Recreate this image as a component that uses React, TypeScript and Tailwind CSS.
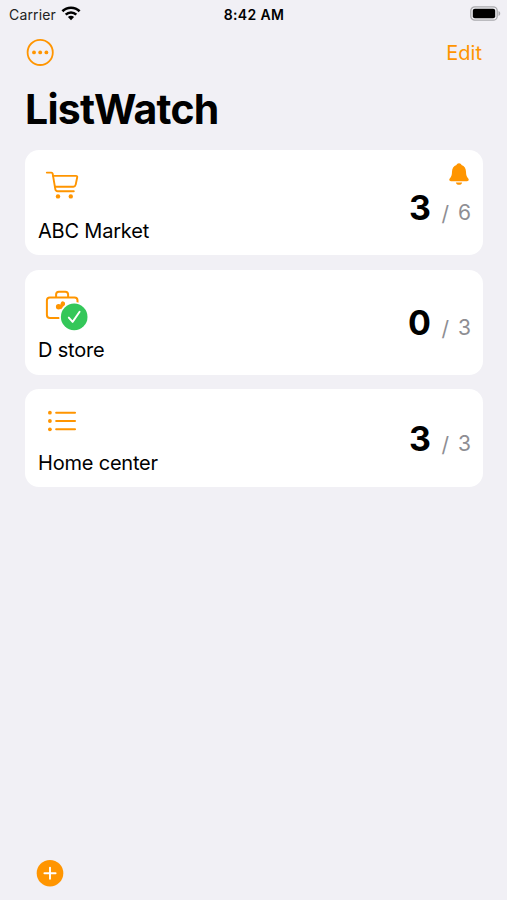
import type { ReactNode } from 'react';

function WifiIcon() {
  return (
    <svg width="20" height="16" viewBox="0 0 20 16" fill="none" stroke="#000" strokeWidth="2.6">
      <path d="M1.4 5.2 C6.2 0.5 13.8 0.5 18.6 5.2" />
      <path d="M4.7 8.6 C7.7 5.7 12.3 5.7 15.3 8.6" />
      <path d="M10 14.2 L6.9 11 C8.7 9.4 11.3 9.4 13.1 11 Z" fill="#000" stroke="none" />
    </svg>
  );
}

function BatteryIcon() {
  return (
    <svg width="31" height="16" viewBox="0 0 31 16">
      <rect x="0.8" y="0.8" width="26.4" height="13.4" rx="4" fill="#f1f0f5" stroke="#a9a9ad" strokeWidth="1.3" />
      <rect x="2.8" y="2.8" width="22.4" height="9.4" rx="2" fill="#000" />
      <path d="M28.5 5 C30.8 5.7 30.8 9.3 28.5 10 Z" fill="#a9a9ad" />
    </svg>
  );
}

function MoreIcon() {
  return (
    <svg width="28" height="28" viewBox="0 0 28 28" fill="#ff9500">
      <circle cx="14.2" cy="14.4" r="12.6" fill="none" stroke="#ff9500" strokeWidth="1.8" />
      <circle cx="8" cy="14.4" r="1.9" />
      <circle cx="14.2" cy="14.4" r="1.9" />
      <circle cx="20.4" cy="14.4" r="1.9" />
    </svg>
  );
}

function CartIcon() {
  return (
    <svg width="36" height="32" viewBox="0 0 36 32" fill="none" stroke="#ff9500" strokeWidth="1.9" strokeLinecap="round" strokeLinejoin="round">
      <path d="M2.8 4.6 H7.4 C8.2 4.6 8.5 5 8.7 5.8 L11.3 21.2 C11.5 22.6 12.3 23.2 13.6 23.2 H29.8" />
      <path d="M9.2 7.9 H32 C33 7.9 33.4 8.4 33.2 9.3 L31.7 16.6 C31.4 18 30.7 18.6 29.3 18.7 L11 18.7" />
      <circle cx="14" cy="28.4" r="2.2" fill="#ff9500" stroke="none" />
      <circle cx="26.8" cy="28.4" r="2.2" fill="#ff9500" stroke="none" />
    </svg>
  );
}

function MedicineIcon() {
  return (
    <svg width="48" height="44" viewBox="0 0 48 44" fill="none">
      <rect x="2.9" y="9.5" width="30.6" height="20.4" rx="3" stroke="#ff9500" strokeWidth="2" />
      <path d="M12.1 9 V6.5 C12.1 4.6 13 3.7 14.9 3.7 H21.3 C23.2 3.7 24.1 4.6 24.1 6.5 V9" stroke="#ff9500" strokeWidth="2" />
      {/* pills */}
      <circle cx="14.6" cy="18.8" r="2.7" fill="#ff9500" />
      <path d="M17.9 19.4 L18.9 15.6" stroke="#ff9500" strokeWidth="4.4" strokeLinecap="round" />
      <circle cx="30.2" cy="28.9" r="15" fill="#fff" />
      <circle cx="30.2" cy="28.9" r="13.3" fill="#34c759" />
      <path d="M24.8 29.6 L28.6 33.9 L35.6 23.7" stroke="#fff" strokeWidth="1.9" strokeLinecap="round" strokeLinejoin="round" />
    </svg>
  );
}

function ListIcon() {
  return (
    <svg width="36" height="28" viewBox="0 0 36 28" stroke="#ff9500" strokeWidth="2.1" strokeLinecap="round">
      <path d="M12.2 5.7 H31 M12.2 14 H31 M12.2 22.3 H31" />
      <g fill="#ff9500" stroke="none">
        <circle cx="5.9" cy="5.7" r="1.9" />
        <circle cx="5.9" cy="14" r="1.9" />
        <circle cx="5.9" cy="22.3" r="1.9" />
      </g>
    </svg>
  );
}

function BellIcon() {
  return (
    <svg width="20" height="23" viewBox="0 0 20 23" fill="#ff9500">
      <path d="M10 0.2 C8.7 0.2 7.9 0.9 7.5 2.1 C4.5 3.2 3.1 5.5 3 8.8 C2.9 12.3 2.4 13.3 1.2 15 C0.5 15.9 0.2 16.4 0.3 17.1 C0.5 17.8 1 18.2 2 18.2 H18 C19 18.2 19.5 17.8 19.7 17.1 C19.8 16.4 19.5 15.9 18.8 15 C17.6 13.3 17.1 12.3 17 8.8 C16.9 5.5 15.5 3.2 12.5 2.1 C12.1 0.9 11.3 0.2 10 0.2 Z" />
      <path d="M6.9 19.4 H13.1 C12.9 21 11.7 21.8 10 21.8 C8.3 21.8 7.1 21 6.9 19.4 Z" />
    </svg>
  );
}

function AddIcon() {
  return (
    <svg width="28" height="28" viewBox="0 0 28 28" fill="none">
      <circle cx="14" cy="14.2" r="13.3" fill="#ff9500" />
      <path d="M14 8.6 V19.8 M8.4 14.2 H19.6" stroke="#fff" strokeWidth="1.9" strokeLinecap="round" />
    </svg>
  );
}

interface ListCardProps {
  name: string;
  count: number;
  total: number;
  className: string;
  countClassName: string;
  icon: ReactNode;
  alarm?: boolean;
}

function ListCard({ name, count, total, className, countClassName, icon, alarm }: ListCardProps) {
  return (
    <div className={`relative flex justify-between rounded-[14px] bg-white pl-[13px] pr-3 ${className}`}>
      <div className="flex flex-col justify-between pt-[18px]">
        <div className="ml-[6px] h-8">{icon}</div>
        <div className="whitespace-nowrap text-[20px] leading-7 tracking-[-0.2px]">{name}</div>
      </div>
      <div className={`flex items-center ${countClassName}`}>
        <div className="flex items-baseline leading-10">
          <span className="text-[34px] font-bold tracking-[-0.5px]">{count}</span>
          <span className="relative top-px ml-[11px] text-[21px] text-[#8e8e93]">/</span>
          <span className="ml-[9px] text-[21px] text-[#8e8e93]">{total}</span>
        </div>
      </div>
      {alarm && (
        <div className="absolute right-[14px] top-[13px]">
          <BellIcon />
        </div>
      )}
    </div>
  );
}

export default function App() {
  return (
    <div className="flex h-[900px] w-[507px] flex-col bg-[#f1f0f5] font-['Inter',sans-serif] text-black">
      {/* Status bar */}
      <div className="grid h-7 grid-cols-3 items-center pl-[9px] pr-[6px] text-[14px]">
        <div className="flex items-center gap-[5px] text-[#222]">
          <span className="tracking-[0.15px]">Carrier</span>
          <WifiIcon />
        </div>
        <div className="-ml-[2px] text-center font-semibold tracking-[0.35px]">8:42 AM</div>
        <div className="flex justify-end">
          <BatteryIcon />
        </div>
      </div>

      {/* Toolbar */}
      <div className="flex h-12 items-center justify-between pl-[26px] pr-[25px]">
        <button><MoreIcon /></button>
        <button className="pt-[2px] text-[20px] text-[#ff9500]">Edit</button>
      </div>

      <h1 className="pl-[25px] pt-2 text-[41px] font-bold leading-[50px] tracking-[-0.75px]">ListWatch</h1>

      <div className="mt-4 flex flex-col pl-[25px] pr-6">
        <ListCard name="ABC Market" count={3} total={6} className="h-[105px] pb-[10px]" countClassName="pt-[25px]" icon={<CartIcon />} alarm />
        <ListCard name="D store" count={0} total={3} className="mt-[15px] h-[105px] pb-[11px]" countClassName="pt-[17px]" icon={<MedicineIcon />} />
        <ListCard name="Home center" count={3} total={3} className="mt-[14px] h-[98px] pb-[10px]" countClassName="pt-[17px]" icon={<ListIcon />} />
      </div>

      <div className="mt-auto pb-[13px] pl-[36px]">
        <button className="block"><AddIcon /></button>
      </div>
    </div>
  );
}
